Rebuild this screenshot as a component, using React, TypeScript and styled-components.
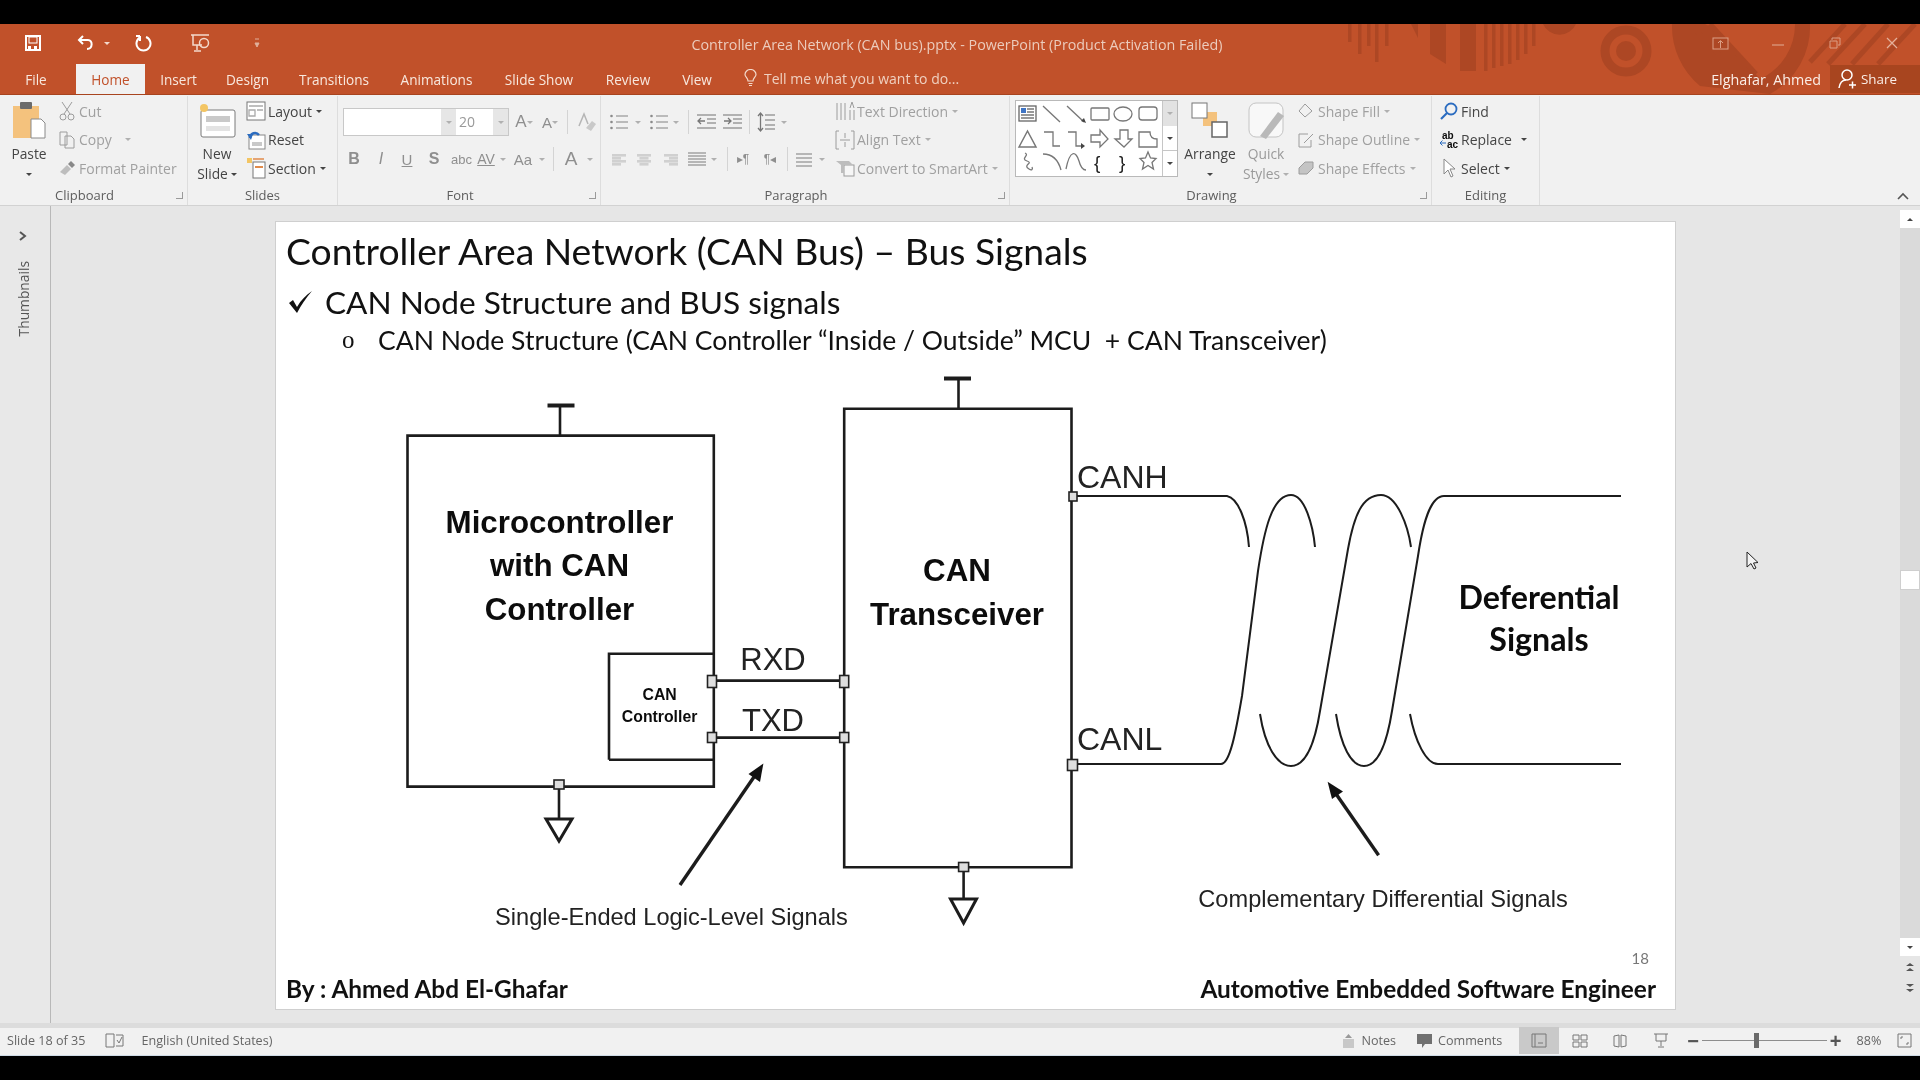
import React from 'react';
import styled, { createGlobalStyle } from 'styled-components';

const GlobalStyle = createGlobalStyle`
  html, body { margin: 0; padding: 0; background: #000; }
  * { box-sizing: border-box; }
`;

const Page = styled.div`
  width: 1920px;
  height: 1080px;
  background: #000;
  display: flex;
  flex-direction: column;
  overflow: hidden;
  filter: blur(0.45px);
  font-family: 'Open Sans', 'Liberation Sans', sans-serif;
`;

const Svg = styled.svg`
  display: block;
  flex-shrink: 0;
`;

/* ---------- title bar + tabs ---------- */
const Chrome = styled.header`
  margin-top: 24px;
  height: 71px;
  background: #c1512a;
  border-bottom: 1px solid #a8441f;
  position: relative;
  flex-shrink: 0;
`;

const ChromeArt = styled.svg`
  position: absolute;
  left: 1300px;
  top: 0;
`;

const TitleRow = styled.div`
  height: 38px;
  display: grid;
  grid-template-columns: 1fr auto 1fr;
  align-items: center;
  position: relative;
`;

const Qat = styled.div`
  display: flex;
  align-items: center;
`;

const QatButton = styled.div<{ $ml: number; $w: number }>`
  margin-left: ${(p) => p.$ml}px;
  width: ${(p) => p.$w}px;
  display: flex;
  justify-content: center;
`;

const WindowTitle = styled.div`
  color: #ecccbd;
  font-size: 14.3px;
  margin: 2px 6px 0 0;
  white-space: nowrap;
`;

const WinControls = styled.div`
  display: flex;
  justify-content: flex-end;
  height: 34px;
`;

const WinButton = styled.div`
  width: 57px;
  display: flex;
  align-items: center;
  justify-content: center;
`;

const TabRow = styled.div`
  height: 32px;
  display: flex;
  align-items: flex-end;
  position: relative;
`;

const Tab = styled.div<{ $w: number; $active?: boolean; $pr?: number }>`
  width: ${(p) => p.$w}px;
  height: 30px;
  line-height: 32px;
  text-align: center;
  padding-right: ${(p) => p.$pr ?? 0}px;
  font-size: 13.6px;
  color: ${(p) => (p.$active ? '#c1512a' : '#f8e8de')};
  background: ${(p) => (p.$active ? '#f1f1f1' : 'transparent')};
`;

const TellMe = styled.div`
  display: flex;
  align-items: center;
  gap: 7px;
  height: 32px;
  margin-left: 16px;
  color: #efd0c0;
  font-size: 14px;
`;

const UserName = styled.div`
  margin-left: auto;
  margin-right: 9px;
  height: 30px;
  line-height: 32px;
  color: #fbeee7;
  font-size: 14.3px;
`;

const ShareButton = styled.div`
  width: 90px;
  height: 28px;
  margin-bottom: 1px;
  background: #a8451f;
  color: #fbeee7;
  font-size: 13.4px;
  display: flex;
  align-items: center;
  gap: 4px;
  padding-left: 7px;
`;

/* ---------- ribbon ---------- */
const Ribbon = styled.div`
  height: 111px;
  background: #f1f1f1;
  border-bottom: 1px solid #d2d2d2;
  display: flex;
  position: relative;
  flex-shrink: 0;
`;

const Group = styled.section<{ $w: number }>`
  width: ${(p) => p.$w}px;
  height: 109px;
  margin-top: 1px;
  border-right: 1px solid #dddddd;
  display: flex;
  flex-direction: column;
  flex-shrink: 0;
`;

const GroupBody = styled.div`
  flex: 1;
  display: flex;
  padding-top: 1px;
`;

const GroupLabel = styled.div<{ $launcher?: boolean }>`
  height: 19px;
  line-height: 18px;
  text-align: center;
  font-size: 13px;
  color: #5d5d5d;
  padding-right: ${(p) => (p.$launcher ? 18 : 0)}px;
  position: relative;
`;

const Launcher = styled.span`
  position: absolute;
  right: 4px;
  top: 6px;
  width: 7px;
  height: 7px;
  border-right: 1px solid #9a9a9a;
  border-bottom: 1px solid #9a9a9a;
`;

const BigButton = styled.div<{ $w: number; $ml?: number; $dim?: boolean }>`
  width: ${(p) => p.$w}px;
  margin-left: ${(p) => p.$ml ?? 0}px;
  height: 87px;
  display: flex;
  flex-direction: column;
  align-items: center;
  font-size: 13.8px;
  line-height: 20px;
  color: ${(p) => (p.$dim ? '#9a9a9a' : '#444')};
`;

const BigIcon = styled.div`
  height: 47px;
  margin-bottom: 1px;
  padding-top: 5px;
`;

const BigLine = styled.div`
  display: flex;
  align-items: center;
  gap: 3px;
  height: 20px;
  white-space: nowrap;
`;

const SmallColumn = styled.div<{ $ml: number }>`
  margin-left: ${(p) => p.$ml}px;
  display: flex;
  flex-direction: column;
`;

const SmallRow = styled.div<{ $dim?: boolean }>`
  height: 28.5px;
  display: flex;
  align-items: center;
  gap: 1px;
  font-size: 14px;
  white-space: nowrap;
  color: ${(p) => (p.$dim ? '#a0a0a0' : '#454545')};
`;

const SmallIcon = styled.div`
  width: 22px;
  display: flex;
  justify-content: center;
`;

const Caret = styled.span<{ $dim?: boolean; $ml?: number; $up?: boolean; $pale?: boolean }>`
  display: inline-block;
  width: 0;
  height: 0;
  margin-left: ${(p) => p.$ml ?? 0}px;
  border-left: 3px solid transparent;
  border-right: 3px solid transparent;
  border-top: 3px solid ${(p) => (p.$pale ? '#f3d9cb' : p.$dim ? '#b0b0b0' : '#444')};
  transform: ${(p) => (p.$up ? 'rotate(180deg)' : 'none')};
`;

const IconStack = styled.div`
  display: flex;
  flex-direction: column;
  padding-top: 11px;
  gap: 9px;
`;

const IconRow = styled.div`
  display: flex;
  align-items: center;
  height: 28px;
`;

const Slot = styled.div<{ $ml: number; $w: number }>`
  margin-left: ${(p) => p.$ml}px;
  width: ${(p) => p.$w}px;
  display: flex;
  justify-content: center;
  align-items: center;
  color: #8f8f8f;
  font-size: 15px;
  white-space: nowrap;
`;

const Glyph = styled.span<{ $bold?: boolean; $italic?: boolean; $under?: boolean; $size?: number }>`
  font-family: 'Liberation Sans', sans-serif;
  font-weight: ${(p) => (p.$bold ? 700 : 400)};
  font-style: ${(p) => (p.$italic ? 'italic' : 'normal')};
  text-decoration: ${(p) => (p.$under ? 'underline' : 'none')};
  font-size: ${(p) => p.$size ?? 15}px;
`;

const Divider = styled.div<{ $ml: number }>`
  margin-left: ${(p) => p.$ml}px;
  width: 1px;
  height: 24px;
  background: #d4d4d4;
  flex-shrink: 0;
`;

const FontCombo = styled.div`
  margin-left: 5px;
  width: 166px;
  height: 28px;
  border: 1px solid #c8c8c8;
  display: flex;
  background: #fff;
  font-size: 14px;
  color: #999;
`;

const ComboArrow = styled.div`
  width: 15px;
  background: #e6e6e6;
  display: flex;
  align-items: center;
  justify-content: center;
`;

const ComboField = styled.div<{ $w: number }>`
  width: ${(p) => p.$w}px;
  padding-left: 3px;
  line-height: 26px;
`;

const ShapeGallery = styled.div`
  margin: 3px 0 0 5px;
  width: 163px;
  height: 77px;
  background: #fff;
  border: 1px solid #b9b9b9;
  display: flex;
`;

const GalleryScroll = styled.div`
  width: 16px;
  border-left: 1px solid #c6c6c6;
  display: flex;
  flex-direction: column;
`;

const GalleryCell = styled.div<{ $off?: boolean; $line?: boolean }>`
  flex: 1;
  background: ${(p) => (p.$off ? '#e2e2e2' : '#fff')};
  border-top: ${(p) => (p.$line ? '1px solid #c6c6c6' : 'none')};
  display: flex;
  align-items: center;
  justify-content: center;
`;

const CollapseRibbon = styled.div`
  position: absolute;
  right: 11px;
  bottom: 5px;
`;

/* ---------- editor ---------- */
const Editor = styled.main`
  height: 817px;
  display: flex;
  background: #e6e6e6;
  position: relative;
  flex-shrink: 0;
`;

const ThumbPane = styled.aside`
  width: 51px;
  border-right: 1px solid #b8b8b8;
  background: #e8e8e8;
  display: flex;
  flex-direction: column;
  align-items: center;
  padding: 25px 4px 0 0;
`;

const ThumbLabel = styled.div`
  margin-top: 20px;
  writing-mode: vertical-rl;
  transform: rotate(180deg);
  font-size: 13.8px;
  color: #555;
`;

const Workspace = styled.div`
  flex: 1;
  padding: 15px 0 0 224px;
`;

const Slide = styled.article`
  width: 1401px;
  height: 789px;
  background: #fff;
  border: 1px solid #cfcfcf;
  display: flex;
  flex-direction: column;
  font-family: Lato, 'Open Sans', sans-serif;
  color: #111;
`;

const SlideTitle = styled.h1`
  margin: 0;
  height: 60px;
  line-height: 58px;
  padding-left: 10px;
  font-size: 37.3px;
  font-weight: 400;
  white-space: nowrap;
`;

const BulletRow = styled.div`
  height: 40px;
  display: flex;
  align-items: center;
  padding-left: 12px;
  gap: 12px;
  font-size: 31.6px;
  white-space: nowrap;
`;

const SubRow = styled.div`
  height: 36px;
  display: flex;
  align-items: center;
  padding-left: 66px;
  font-size: 26.5px;
  white-space: nowrap;
`;

const SubBullet = styled.span`
  width: 36px;
  font-family: 'Liberation Serif', serif;
  font-size: 25px;
`;

const DiagramSvg = styled.svg`
  display: block;
  margin-top: 3px;
  flex-shrink: 0;
`;

const Wire = styled.path<{ $w?: number }>`
  fill: none;
  stroke: #1c1c1c;
  stroke-width: ${(p) => p.$w ?? 2.6}px;
`;

const Pin = styled.rect`
  fill: #dedede;
  stroke: #222;
  stroke-width: 1.6px;
`;

const ArrowHead = styled.polygon`
  fill: #111;
`;

const Ground = styled.polygon`
  fill: #fff;
  stroke: #1c1c1c;
  stroke-width: 3px;
`;

const DiagramText = styled.text<{ $size: number; $bold?: boolean; $calibri?: boolean }>`
  font-family: ${(p) => (p.$calibri ? "Lato, 'Open Sans', sans-serif" : "'Liberation Sans', sans-serif")};
  font-size: ${(p) => p.$size}px;
  font-weight: ${(p) => (p.$bold ? 700 : 400)};
  fill: ${(p) => (p.$bold ? '#0c0c0c' : '#222')};
`;

const PageNumber = styled.div`
  height: 24px;
  line-height: 24px;
  text-align: right;
  padding-right: 26px;
  font-size: 15px;
  color: #777;
`;

const SlideFooter = styled.div`
  height: 36px;
  display: flex;
  justify-content: space-between;
  align-items: center;
  padding: 0 19px 0 10px;
  font-size: 24.4px;
  font-weight: 700;
  white-space: nowrap;
`;

const ScrollBar = styled.div`
  width: 20px;
  padding-top: 4px;
  display: flex;
  flex-direction: column;
`;

const ScrollButton = styled.div`
  height: 18px;
  background: #fff;
  display: flex;
  align-items: center;
  justify-content: center;
  flex-shrink: 0;
`;

const ScrollTrack = styled.div<{ $h: number }>`
  height: ${(p) => p.$h}px;
  background: #dadada;
`;

const ScrollThumb = styled.div`
  height: 20px;
  background: #fff;
  border: 1px solid #cfcfcf;
`;

const PageJump = styled.div`
  height: 20px;
  margin-top: 1px;
  display: flex;
  align-items: center;
  justify-content: center;
`;

const MouseCursor = styled.svg`
  position: absolute;
  left: 1746px;
  top: 345px;
`;

/* ---------- status bar ---------- */
const BottomGutter = styled.div`
  height: 5px;
  background: #dcdcdc;
  flex-shrink: 0;
`;

const StatusBar = styled.footer`
  height: 28px;
  background: #f1f1f1;
  border-bottom: 1px solid #cfdbe6;
  padding-bottom: 2px;
  display: flex;
  align-items: center;
  font-size: 12.6px;
  color: #666;
  flex-shrink: 0;
`;

const StatusItem = styled.div<{ $ml: number }>`
  margin-left: ${(p) => p.$ml}px;
  display: flex;
  align-items: center;
  gap: 6px;
  white-space: nowrap;
`;

const ViewButton = styled.div<{ $active?: boolean; $ml?: number }>`
  width: 40px;
  height: 27px;
  margin-left: ${(p) => p.$ml ?? 0}px;
  background: ${(p) => (p.$active ? '#c9c9c9' : 'transparent')};
  display: flex;
  align-items: center;
  justify-content: center;
`;

const ZoomTrack = styled.div`
  width: 125px;
  height: 1px;
  margin-left: 3px;
  background: #8d8d8d;
  position: relative;
`;

const ZoomThumb = styled.span`
  position: absolute;
  left: 52px;
  top: -7px;
  width: 5px;
  height: 15px;
  background: #6a6a6a;
`;

const ZoomSign = styled.span<{ $ml: number }>`
  margin-left: ${(p) => p.$ml}px;
  font-family: 'Liberation Sans', sans-serif;
  font-size: 20px;
  line-height: 20px;
  font-weight: 700;
  color: #555;
`;

const G = '#9c9c9c';

/* ---------- small drawings ---------- */
const Lines = ({ w, rows, color = G, sw = 1.4 }: { w: number; rows: [number, number][]; color?: string; sw?: number }) => (
  <Svg width={w} height={20} viewBox={`0 0 ${w} 20`}>
    {rows.map(([x, y], i) => (
      <line key={i} x1={x} x2={w} y1={y} y2={y} stroke={color} strokeWidth={sw} />
    ))}
  </Svg>
);

const ListIcon = () => (
  <Svg width={18} height={20} viewBox="0 0 18 20">
    {[4, 10, 16].map((y) => (
      <g key={y}>
        <circle cx={1.5} cy={y} r={1.3} fill="#8a8a8a" />
        <line x1={6} x2={18} y1={y} y2={y} stroke={G} strokeWidth={1.3} />
      </g>
    ))}
  </Svg>
);

const IndentIcon = ({ flip }: { flip?: boolean }) => (
  <Svg width={19} height={20} viewBox="0 0 19 20">
    <path d="M0 3 H19 M10 7 H19 M10 11 H19 M0 16 H19" stroke={G} strokeWidth={1.3} />
    <path d={flip ? 'M1 9 H8 M5 6 L8 9 L5 12' : 'M8 9 H1 M4 6 L1 9 L4 12'} fill="none" stroke="#777" strokeWidth={1.3} />
  </Svg>
);

const SpacingIcon = () => (
  <Svg width={18} height={22} viewBox="0 0 18 22">
    <path d="M8 4 H18 M8 9 H18 M8 14 H18 M8 18 H18" stroke={G} strokeWidth={1.3} />
    <path d="M3.5 2 V20 M1 5 L3.5 2 L6 5 M1 17 L3.5 20 L6 17" fill="none" stroke="#777" strokeWidth={1.3} />
  </Svg>
);

const AlignBlock = ({ kind }: { kind: 'l' | 'c' | 'r' }) => {
  const rows = [
    [14, 5],
    [9, 8],
    [14, 11],
    [9, 14],
  ];
  return (
    <Svg width={14} height={20} viewBox="0 0 14 20">
      {rows.map(([w, y], i) => (
        <rect key={i} x={kind === 'l' ? 0 : kind === 'c' ? (14 - w) / 2 : 14 - w} y={y} width={w} height={2.6} fill="#d0d0d0" />
      ))}
    </Svg>
  );
};

const ChromeDecoration = () => {
  const stripes = [
    [48, 18], [58, 30], [67, 22], [75, 38], [85, 22], [184, 47], [192, 44], [200, 42], [208, 40], [216, 36], [224, 30], [232, 22],
  ];
  return (
    <ChromeArt width={620} height={70} viewBox="0 0 620 70">
      <g fill="#ad4724">
        {stripes.map(([x, h]) => (
          <rect key={x} x={x} y={0} width={3.5} height={h} />
        ))}
        <polygon points="111,0 118,0 118,14" />
        <polygon points="130,0 146,0 146,40 130,30" />
        <rect x={160} y={0} width={16} height={47} />
        <path d="M243 0 H276 A18 18 0 0 1 243 0 Z" />
        <circle cx={326} cy={27} r={10} />
      </g>
      <circle cx={326} cy={27} r={21} fill="none" stroke="#ad4724" strokeWidth={9} />
      <path d="M372 0 A78 78 0 0 0 400 62 L470 70 A76 76 0 0 0 510 0 L495 0 A60 60 0 0 1 460 55 L415 5 L405 0 Z" fill="#ad4724" />
      <g stroke="#ad4724" strokeWidth={5}>
        <line x1={390} y1={0} x2={445} y2={58} />
        <line x1={410} y1={0} x2={456} y2={50} />
        <line x1={545} y1={0} x2={510} y2={38} />
        <line x1={565} y1={0} x2={528} y2={40} />
        <line x1={588} y1={0} x2={552} y2={40} />
        <line x1={615} y1={0} x2={578} y2={40} />
      </g>
    </ChromeArt>
  );
};

const Gallery = () => (
  <Svg width={146} height={75} viewBox="1016 102 146 75">
    <g fill="none" stroke="#777" strokeWidth={1.3}>
      <rect x={1019} y={107} width={17} height={15} stroke="#666" />
      <path d="M1027 110 H1034 M1027 113 H1034 M1021 116 H1034 M1021 119 H1034" />
      <path d="M1043 107 L1060 123" />
      <path d="M1067 107 L1084 123" />
      <rect x={1091} y={109} width={18} height={12} rx={1} />
      <ellipse cx={1123} cy={115} rx={9} ry={7} />
      <rect x={1139} y={108} width={18} height={13} rx={3} />
      <path d="M1019 148 L1027.5 132 L1036 148 Z" strokeWidth={1.5} />
      <path d="M1044 133 H1053 V147 H1060" />
      <path d="M1068 133 H1076 V147 H1083" />
      <path d="M1091 136 H1100 V131 L1108 140 L1100 148 V143 H1091 Z" />
      <path d="M1120 131 H1128 V140 H1132 L1124 148 L1115 140 H1120 Z" />
      <path d="M1139 148 V133 H1150 C1150 138 1153 140 1157 140 V148 Z" />
      <path d="M1025 154 C1030 156 1020 160 1027 162 C1034 164 1022 166 1029 170 C1032 172 1033 170 1032 168" />
      <path d="M1043 155 C1052 155 1058 160 1061 171" />
      <path d="M1066 170 C1070 150 1076 152 1079 162 C1081 170 1084 171 1086 171" />
      <path d="M1148 153 L1150.5 159 L1156 159.5 L1152 163.5 L1153.5 170 L1148 166.5 L1142.5 170 L1144 163.5 L1140 159.5 L1145.5 159 Z" />
    </g>
    <rect x={1021} y={109} width={5} height={5} fill="#3f74c4" />
    <polygon points="1086,124 1081,122 1084,119" fill="#444" />
    <polygon points="1085,147 1081,144 1081,150" fill="#444" />
    <DiagramText x={1094} y={170} $size={19}>{'{'}</DiagramText>
    <DiagramText x={1119} y={170} $size={19}>{'}'}</DiagramText>
  </Svg>
);

const Diagram = () => (
  <DiagramSvg width={1399} height={585} viewBox="276 360 1399 585">
    {/* microcontroller */}
    <Wire d="M407.5 434.6 H713.8 V785.6 H407.5 Z" />
    <Wire d="M609 758.8 V652.8 H713.8 M609 758.8 H713.8" />
    <Wire d="M560 434 V404.5" />
    <Wire d="M547.5 404.5 H574.5" $w={4} />
    <Wire d="M559 786 V817" />
    <Ground points="546,818 572,818 559,840" />
    {/* transceiver */}
    <Wire d="M844.2 407.8 H1071.5 V866.3 H844.2 Z" />
    <Wire d="M958.5 407 V377.5" />
    <Wire d="M944 377.5 H971" $w={4} />
    <Wire d="M963.6 866 V897" />
    <Ground points="950.5,898 976.5,898 963.6,922" />
    {/* RXD / TXD */}
    <Wire d="M712 679.6 H844 M712 736.6 H844" />
    <Pin x={707.5} y={674.5} width={9} height={12} />
    <Pin x={707.5} y={731.5} width={9} height={10} />
    <Pin x={839.7} y={674.5} width={9} height={12} />
    <Pin x={839.7} y={731.5} width={9} height={10} />
    <Pin x={554} y={779} width={10} height={9} />
    <Pin x={958.6} y={861.5} width={10} height={9} />
    {/* twisted pair */}
    <g>
      <Wire $w={2} d="M1073 495 H1227 C1238 497 1247 520 1249 546" />
      <Wire $w={2} d="M1073 763 H1221 C1230 763 1236 730 1242 695 L1258 570 C1264 530 1272 494 1291 494 C1305 494 1313 525 1315 546" />
      <Wire $w={2} d="M1260 713 C1265 745 1277 765 1291 765 C1308 765 1316 735 1320 710 L1348 548 C1354 515 1362 494 1381 494 C1397 494 1408 525 1411 546" />
      <Wire $w={2} d="M1336 713 C1341 745 1351 765 1364 765 C1380 765 1388 735 1392 710 L1418 555 C1424 515 1432 495 1444 495 H1621" />
      <Wire $w={2} d="M1410 713 C1415 740 1426 763 1438 763 H1621" />
    </g>
    <Pin x={1069} y={491} width={8} height={9} />
    <Pin x={1067.5} y={758.5} width={10} height={11} />
    {/* callout arrows */}
    <Wire d="M680 884 L756 773" $w={3.4} />
    <ArrowHead points="763.4,762.6 760,781 748.5,773" />
    <Wire d="M1378.6 854.3 L1334 790" $w={3.4} />
    <ArrowHead points="1327.6,780.7 1343,790.5 1332,798" />
    {/* labels */}
    <DiagramText x={559.5} y={532} $size={31.3} $bold textAnchor="middle">Microcontroller</DiagramText>
    <DiagramText x={559.5} y={575} $size={31.3} $bold textAnchor="middle">with CAN</DiagramText>
    <DiagramText x={559.5} y={619} $size={31.3} $bold textAnchor="middle">Controller</DiagramText>
    <DiagramText x={957} y={580} $size={31.3} $bold textAnchor="middle">CAN</DiagramText>
    <DiagramText x={957} y={624} $size={31.3} $bold textAnchor="middle">Transceiver</DiagramText>
    <DiagramText x={659.6} y={699} $size={15.8} $bold textAnchor="middle">CAN</DiagramText>
    <DiagramText x={659.6} y={721} $size={15.8} $bold textAnchor="middle">Controller</DiagramText>
    <DiagramText x={773} y={669} $size={31} textAnchor="middle">RXD</DiagramText>
    <DiagramText x={773} y={730} $size={31} textAnchor="middle">TXD</DiagramText>
    <DiagramText x={1077} y={487} $size={32}>CANH</DiagramText>
    <DiagramText x={1077} y={749} $size={32}>CANL</DiagramText>
    <DiagramText x={1539} y={608} $size={32.2} $bold $calibri textAnchor="middle">Deferential</DiagramText>
    <DiagramText x={1539} y={650} $size={32.2} $bold $calibri textAnchor="middle">Signals</DiagramText>
    <DiagramText x={671.5} y={924} $size={23.6} textAnchor="middle">Single-Ended Logic-Level Signals</DiagramText>
    <DiagramText x={1383} y={906} $size={23.6} textAnchor="middle">Complementary Differential Signals</DiagramText>
  </DiagramSvg>
);

const tabs = [
  { label: 'File', w: 76, pr: 4 },
  { label: 'Home', w: 69, active: true },
  { label: 'Insert', w: 67 },
  { label: 'Design', w: 71 },
  { label: 'Transitions', w: 102 },
  { label: 'Animations', w: 103 },
  { label: 'Slide Show', w: 102 },
  { label: 'Review', w: 76 },
  { label: 'View', w: 62 },
];

const App = () => (
  <Page>
    <GlobalStyle />
    <Chrome>
      <ChromeDecoration />
      <TitleRow>
        <Qat>
          <QatButton $ml={24} $w={18}>
            <Svg width={18} height={18} viewBox="0 0 18 18">
              <path d="M2 2 H16 V16 H2 Z" fill="none" stroke="#fff" strokeWidth={2} />
              <rect x={5} y={3} width={8} height={6} fill="#c1512a" stroke="#fff" />
              <rect x={4} y={12} width={3} height={3} fill="#fff" />
              <rect x={10} y={12} width={3} height={3} fill="#fff" />
            </Svg>
          </QatButton>
          <QatButton $ml={35} $w={18}>
            <Svg width={18} height={18} viewBox="0 0 18 18">
              <path d="M6 2 L2 6 L6 10 M2 6 H11 C16 6 16 15 10 15" fill="none" stroke="#fff" strokeWidth={2} />
            </Svg>
          </QatButton>
          <QatButton $ml={8} $w={8}>
            <Caret $pale />
          </QatButton>
          <QatButton $ml={23} $w={18}>
            <Svg width={18} height={18} viewBox="0 0 18 18">
              <path d="M7 3 A7 7 0 1 0 12 3 M6 2 V7 M6 2 H2" fill="none" stroke="#fff" strokeWidth={2} />
            </Svg>
          </QatButton>
          <QatButton $ml={37} $w={22}>
            <Svg width={22} height={20} viewBox="0 0 22 20">
              <path d="M2 2 H20 M4 2 V12 H13 M8 12 V17 M5 18 H12" fill="none" stroke="#f3d9cb" strokeWidth={1.5} />
              <circle cx={15} cy={10} r={4.5} fill="none" stroke="#f3d9cb" strokeWidth={1.5} />
            </Svg>
          </QatButton>
          <QatButton $ml={42} $w={8}>
            <Svg width={6} height={10} viewBox="0 0 6 10">
              <path d="M1 1 H5 M1 5 H5 L3 9 Z" fill="#e0b09b" stroke="#e0b09b" />
            </Svg>
          </QatButton>
        </Qat>
        <WindowTitle>Controller Area Network (CAN bus).pptx - PowerPoint (Product Activation Failed)</WindowTitle>
        <WinControls>
          <WinButton>
            <Svg width={17} height={13} viewBox="0 0 17 13">
              <rect x={1} y={1} width={15} height={11} fill="none" stroke="#dc9f85" />
              <path d="M8.5 11 V4 M6 6 L8.5 3.5 L11 6" fill="none" stroke="#dc9f85" />
            </Svg>
          </WinButton>
          <WinButton>
            <Svg width={12} height={12} viewBox="0 0 12 12"><path d="M0 8 H12" stroke="#dc9f85" strokeWidth={1.2} /></Svg>
          </WinButton>
          <WinButton>
            <Svg width={12} height={12} viewBox="0 0 12 12">
              <path d="M3 3 V1 H11 V8 H9 M1 4 H8 V11 H1 Z" fill="none" stroke="#dc9f85" />
            </Svg>
          </WinButton>
          <WinButton>
            <Svg width={12} height={12} viewBox="0 0 12 12">
              <path d="M1 1 L11 11 M11 1 L1 11" stroke="#e3b19c" strokeWidth={1.2} />
            </Svg>
          </WinButton>
        </WinControls>
      </TitleRow>
      <TabRow>
        {tabs.map((t) => (
          <Tab key={t.label} $w={t.w} $active={t.active} $pr={t.pr}>{t.label}</Tab>
        ))}
        <TellMe>
          <Svg width={13} height={18} viewBox="0 0 13 18">
            <path d="M4 12 C4 9 1 8 1 5.5 A5.5 5 0 0 1 12 5.5 C12 8 9 9 9 12 Z M4.5 14.5 H8.5 M5 16.5 H8" fill="none" stroke="#f3d9cb" strokeWidth={1.2} />
          </Svg>
          Tell me what you want to do...
        </TellMe>
        <UserName>Elghafar, Ahmed</UserName>
        <ShareButton>
          <Svg width={20} height={22} viewBox="0 0 20 22">
            <circle cx={10} cy={7} r={5} fill="none" stroke="#fff" strokeWidth={1.5} />
            <path d="M2 20 C3 14 6 12 9 12 M12 17 H19 M15.5 13.5 V20.5" fill="none" stroke="#fff" strokeWidth={1.5} />
          </Svg>
          Share
        </ShareButton>
      </TabRow>
    </Chrome>

    <Ribbon>
      <Group $w={188}>
        <GroupBody>
          <BigButton $w={50} $ml={4}>
            <BigIcon>
              <Svg width={34} height={38} viewBox="0 0 34 38">
                <rect x={1} y={4} width={26} height={32} fill="#f4c27d" />
                <rect x={8} y={0} width={12} height={7} rx={1} fill="#6b6b6b" />
                <path d="M19 17 H29 L33 21 V36 H19 Z" fill="#fff" stroke="#8a8a8a" />
              </Svg>
            </BigIcon>
            <BigLine>Paste</BigLine>
            <BigLine><Caret /></BigLine>
          </BigButton>
          <SmallColumn $ml={2}>
            <SmallRow $dim>
              <SmallIcon>
                <Svg width={16} height={20} viewBox="0 0 16 20">
                  <path d="M3 1 L11 13 M13 1 L5 13" stroke={G} fill="none" />
                  <circle cx={4} cy={16} r={3} fill="none" stroke={G} />
                  <circle cx={12} cy={16} r={3} fill="none" stroke={G} />
                </Svg>
              </SmallIcon>
              Cut
            </SmallRow>
            <SmallRow $dim>
              <SmallIcon>
                <Svg width={16} height={18} viewBox="0 0 16 18">
                  <path d="M1 1 H8 V14 H1 Z M6 5 H12 L15 8 V17 H6 Z" fill="#f1f1f1" stroke={G} />
                </Svg>
              </SmallIcon>
              Copy
              <Caret $dim $ml={12} />
            </SmallRow>
            <SmallRow $dim>
              <SmallIcon>
                <Svg width={17} height={16} viewBox="0 0 17 16">
                  <path d="M1 12 L8 5 L12 9 L6 15 Z" fill="#bdbdbd" />
                  <path d="M9 4 L12 1 L16 5 L13 8 Z" fill="#888" />
                </Svg>
              </SmallIcon>
              Format Painter
            </SmallRow>
          </SmallColumn>
        </GroupBody>
        <GroupLabel $launcher>Clipboard<Launcher /></GroupLabel>
      </Group>

      <Group $w={150}>
        <GroupBody>
          <BigButton $w={48} $ml={5}>
            <BigIcon>
              <Svg width={38} height={36} viewBox="0 0 38 36">
                <rect x={3} y={8} width={34} height={27} rx={2} fill="#fff" stroke="#7b7b7b" />
                <rect x={8} y={14} width={24} height={6} fill="#c9c9c9" />
                <rect x={8} y={24} width={24} height={5} fill="#e3e3e3" />
                <circle cx={6} cy={6} r={4} fill="#f3c563" />
              </Svg>
            </BigIcon>
            <BigLine>New</BigLine>
            <BigLine>Slide<Caret /></BigLine>
          </BigButton>
          <SmallColumn $ml={4}>
            <SmallRow>
              <SmallIcon>
                <Svg width={20} height={20} viewBox="0 0 20 20">
                  <rect x={1} y={1} width={18} height={18} fill="#fff" stroke="#777" />
                  <path d="M3 5 H17 M3 9 H9 V15 H3 Z M11 9 H17" stroke="#aaa" fill="none" strokeWidth={1.3} />
                </Svg>
              </SmallIcon>
              Layout<Caret $ml={3} />
            </SmallRow>
            <SmallRow>
              <SmallIcon>
                <Svg width={20} height={20} viewBox="0 0 20 20">
                  <rect x={3} y={5} width={16} height={14} fill="#fff" stroke="#888" />
                  <path d="M4 8 A5 5 0 0 1 13 5" fill="none" stroke="#2b6cc0" strokeWidth={2.4} />
                  <polygon points="1,4 7,4 5,10" fill="#2b6cc0" />
                  <rect x={6} y={12} width={10} height={4} fill="#c9c9c9" />
                </Svg>
              </SmallIcon>
              Reset
            </SmallRow>
            <SmallRow>
              <SmallIcon>
                <Svg width={20} height={22} viewBox="0 0 20 22">
                  <rect x={7} y={5} width={12} height={16} fill="#fff" stroke="#777" />
                  <path d="M9 10 H17" stroke="#e08a4a" strokeWidth={2} />
                  <rect x={1} y={1} width={5} height={5} fill="#f3c563" />
                  <path d="M7 2 H18" stroke="#e08a4a" strokeWidth={1.5} />
                </Svg>
              </SmallIcon>
              Section<Caret $ml={3} />
            </SmallRow>
          </SmallColumn>
        </GroupBody>
        <GroupLabel>Slides</GroupLabel>
      </Group>

      <Group $w={263}>
        <GroupBody>
          <IconStack>
            <IconRow>
              <FontCombo>
                <ComboField $w={97} />
                <ComboArrow><Caret $dim /></ComboArrow>
                <ComboField $w={37}>20</ComboField>
                <ComboArrow><Caret $dim /></ComboArrow>
              </FontCombo>
              <Slot $ml={5} $w={20}><Glyph $size={17}>A</Glyph><Caret $dim /></Slot>
              <Slot $ml={6} $w={20}><Glyph $size={15}>A</Glyph><Caret $dim /></Slot>
              <Divider $ml={7} />
              <Slot $ml={9} $w={20}>
                <Svg width={20} height={20} viewBox="0 0 20 20">
                  <path d="M2 14 L7 2 L11 12" fill="none" stroke="#b5b5b5" strokeWidth={1.5} />
                  <path d="M9 16 L15 9 L19 12 L14 19 Z" fill="#c9c9c9" />
                </Svg>
              </Slot>
            </IconRow>
            <IconRow>
              <Slot $ml={3} $w={26}><Glyph $bold $size={16}>B</Glyph></Slot>
              <Slot $ml={1} $w={26}><Glyph $italic $size={16}>I</Glyph></Slot>
              <Slot $ml={0} $w={26}><Glyph $under $size={15}>U</Glyph></Slot>
              <Slot $ml={1} $w={26}><Glyph $bold $size={16}>S</Glyph></Slot>
              <Slot $ml={1} $w={27}><Glyph $size={13}>abc</Glyph></Slot>
              <Slot $ml={0} $w={22}><Glyph $under $size={14}>AV</Glyph></Slot>
              <Slot $ml={0} $w={12}><Caret $dim /></Slot>
              <Slot $ml={0} $w={28}><Glyph $size={15}>Aa</Glyph></Slot>
              <Slot $ml={0} $w={10}><Caret $dim /></Slot>
              <Divider $ml={6} />
              <Slot $ml={9} $w={16}><Glyph $size={19}>A</Glyph></Slot>
              <Slot $ml={6} $w={10}><Caret $dim /></Slot>
            </IconRow>
          </IconStack>
        </GroupBody>
        <GroupLabel $launcher>Font<Launcher /></GroupLabel>
      </Group>

      <Group $w={409}>
        <GroupBody>
          <IconStack>
            <IconRow>
              <Slot $ml={9} $w={18}><ListIcon /></Slot>
              <Slot $ml={6} $w={8}><Caret $dim /></Slot>
              <Slot $ml={8} $w={18}><ListIcon /></Slot>
              <Slot $ml={4} $w={8}><Caret $dim /></Slot>
              <Divider $ml={8} />
              <Slot $ml={8} $w={19}><IndentIcon /></Slot>
              <Slot $ml={7} $w={19}><IndentIcon flip /></Slot>
              <Divider $ml={7} />
              <Slot $ml={7} $w={18}><SpacingIcon /></Slot>
              <Slot $ml={5} $w={8}><Caret $dim /></Slot>
            </IconRow>
            <IconRow>
              <Slot $ml={11} $w={14}><AlignBlock kind="l" /></Slot>
              <Slot $ml={11} $w={14}><AlignBlock kind="c" /></Slot>
              <Slot $ml={13} $w={14}><AlignBlock kind="r" /></Slot>
              <Slot $ml={10} $w={18}><Lines w={18} rows={[[0, 4], [0, 7], [0, 10], [0, 13], [0, 16]]} /></Slot>
              <Slot $ml={4} $w={8}><Caret $dim /></Slot>
              <Divider $ml={9} />
              <Slot $ml={8} $w={14}><Glyph $size={12}>▸¶</Glyph></Slot>
              <Slot $ml={12} $w={16}><Glyph $size={12}>¶◂</Glyph></Slot>
              <Divider $ml={9} />
              <Slot $ml={8} $w={16}><Lines w={16} rows={[[0, 5], [0, 9], [0, 13], [0, 17]]} /></Slot>
              <Slot $ml={6} $w={8}><Caret $dim /></Slot>
            </IconRow>
          </IconStack>
          <SmallColumn $ml={8}>
            <SmallRow $dim>
              <SmallIcon>
                <Svg width={20} height={22} viewBox="0 0 20 22">
                  <path d="M2 3 V20 M6 3 V20 M10 3 V20 M15 8 L17 2 L19 8 M15 10 V20 M19 10 V20" stroke={G} fill="none" />
                </Svg>
              </SmallIcon>
              Text Direction<Caret $dim $ml={3} />
            </SmallRow>
            <SmallRow $dim>
              <SmallIcon>
                <Svg width={20} height={20} viewBox="0 0 20 20">
                  <path d="M4 1 H1 V19 H4 M16 1 H19 V19 H16 M5 10 H15 M10 3 V8 M10 12 V17" stroke={G} fill="none" />
                </Svg>
              </SmallIcon>
              Align Text<Caret $dim $ml={3} />
            </SmallRow>
            <SmallRow $dim>
              <SmallIcon>
                <Svg width={20} height={18} viewBox="0 0 20 18">
                  <rect x={9} y={6} width={10} height={11} fill="#f6f6f6" stroke={G} />
                  <path d="M1 2 H14 L18 6 H9 V14 H6 V6 Z" fill="#bdbdbd" />
                </Svg>
              </SmallIcon>
              Convert to SmartArt<Caret $dim $ml={3} />
            </SmallRow>
          </SmallColumn>
        </GroupBody>
        <GroupLabel $launcher>Paragraph<Launcher /></GroupLabel>
      </Group>

      <Group $w={422}>
        <GroupBody>
          <ShapeGallery>
            <Gallery />
            <GalleryScroll>
              <GalleryCell $off><Caret $dim /></GalleryCell>
              <GalleryCell><Caret /></GalleryCell>
              <GalleryCell $line><Caret /></GalleryCell>
            </GalleryScroll>
          </ShapeGallery>
          <BigButton $w={56} $ml={4}>
            <BigIcon>
              <Svg width={38} height={36} viewBox="0 0 38 36">
                <rect x={12} y={10} width={14} height={14} fill="#f4c27d" />
                <rect x={1} y={1} width={15} height={15} fill="#fff" stroke="#777" />
                <rect x={21} y={20} width={15} height={15} fill="#fff" stroke="#666" strokeWidth={1.5} />
              </Svg>
            </BigIcon>
            <BigLine>Arrange</BigLine>
            <BigLine><Caret /></BigLine>
          </BigButton>
          <BigButton $w={50} $ml={3} $dim>
            <BigIcon>
              <Svg width={40} height={38} viewBox="0 0 40 38">
                <rect x={3} y={1} width={34} height={34} rx={7} fill="#f8f8f8" stroke="#c4c4c4" />
                <path d="M38 14 L20 37 L14 34 L32 10 Z" fill="#b9b9b9" />
              </Svg>
            </BigIcon>
            <BigLine>Quick</BigLine>
            <BigLine>Styles<Caret $dim /></BigLine>
          </BigButton>
          <SmallColumn $ml={4}>
            <SmallRow $dim>
              <SmallIcon>
                <Svg width={18} height={18} viewBox="0 0 18 18">
                  <path d="M8 2 L15 9 L8 15 L2 9 Z" fill="none" stroke={G} />
                </Svg>
              </SmallIcon>
              Shape Fill<Caret $dim $ml={3} />
            </SmallRow>
            <SmallRow $dim>
              <SmallIcon>
                <Svg width={18} height={18} viewBox="0 0 18 18">
                  <path d="M2 3 H11 M2 3 V16 H14 V9 M7 12 L16 3" fill="none" stroke={G} />
                </Svg>
              </SmallIcon>
              Shape Outline<Caret $dim $ml={3} />
            </SmallRow>
            <SmallRow $dim>
              <SmallIcon>
                <Svg width={18} height={18} viewBox="0 0 18 18">
                  <path d="M2 9 L8 3 H16 V9 L10 15 H2 Z" fill="#c4c4c4" stroke={G} />
                </Svg>
              </SmallIcon>
              Shape Effects<Caret $dim $ml={3} />
            </SmallRow>
          </SmallColumn>
        </GroupBody>
        <GroupLabel $launcher>Drawing<Launcher /></GroupLabel>
      </Group>

      <Group $w={108}>
        <GroupBody>
          <SmallColumn $ml={6}>
            <SmallRow>
              <SmallIcon>
                <Svg width={18} height={18} viewBox="0 0 18 18">
                  <circle cx={11} cy={7} r={5.5} fill="none" stroke="#2b6cc0" strokeWidth={1.8} />
                  <path d="M7 11 L1 17" stroke="#2b6cc0" strokeWidth={2.2} />
                </Svg>
              </SmallIcon>
              Find
            </SmallRow>
            <SmallRow>
              <SmallIcon>
                <Svg width={20} height={20} viewBox="0 0 20 20">
                  <path d="M1 13 H7 M1 13 L3.5 10.5 M1 13 L3.5 15.5" stroke="#2b6cc0" fill="none" />
                  <DiagramText x={3} y={9} $size={10} $bold>ab</DiagramText>
                  <DiagramText x={8} y={18} $size={10} $bold>ac</DiagramText>
                </Svg>
              </SmallIcon>
              Replace<Caret $ml={8} />
            </SmallRow>
            <SmallRow>
              <SmallIcon>
                <Svg width={14} height={20} viewBox="0 0 14 20">
                  <path d="M2 1 V16 L6 12 L9 19 L11 18 L8 11 L13 11 Z" fill="#fff" stroke="#888" />
                </Svg>
              </SmallIcon>
              Select<Caret $ml={3} />
            </SmallRow>
          </SmallColumn>
        </GroupBody>
        <GroupLabel>Editing</GroupLabel>
      </Group>

      <CollapseRibbon>
        <Svg width={12} height={8} viewBox="0 0 12 8">
          <path d="M1 7 L6 2 L11 7" fill="none" stroke="#555" strokeWidth={1.6} />
        </Svg>
      </CollapseRibbon>
    </Ribbon>

    <Editor>
      <ThumbPane>
        <Svg width={8} height={10} viewBox="0 0 8 10">
          <path d="M1 1 L6 5 L1 9" fill="none" stroke="#555" strokeWidth={2} />
        </Svg>
        <ThumbLabel>Thumbnails</ThumbLabel>
      </ThumbPane>
      <Workspace>
        <Slide>
          <SlideTitle>Controller Area Network (CAN Bus) – Bus Signals</SlideTitle>
          <BulletRow>
            <Svg width={25} height={24} viewBox="0 0 25 24">
              <path d="M1 13 L5 10 L9 17 C13 10 18 5 24 1 C18 8 13 15 9 23 Z" fill="#111" />
            </Svg>
            CAN Node Structure and BUS signals
          </BulletRow>
          <SubRow>
            <SubBullet>o</SubBullet>
            CAN Node Structure (CAN Controller “Inside / Outside” MCU &nbsp;+ CAN Transceiver)
          </SubRow>
          <Diagram />
          <PageNumber>18</PageNumber>
          <SlideFooter>
            <span>By : Ahmed Abd El-Ghafar</span>
            <span>Automotive Embedded Software Engineer</span>
          </SlideFooter>
        </Slide>
      </Workspace>
      <ScrollBar>
        <ScrollButton><Caret $up /></ScrollButton>
        <ScrollTrack $h={342} />
        <ScrollThumb />
        <ScrollTrack $h={348} />
        <ScrollButton><Caret /></ScrollButton>
        <PageJump>
          <Svg width={12} height={10} viewBox="0 0 12 10">
            <path d="M2 4 L6 1 L10 4 Z M2 9 L6 6 L10 9 Z" fill="#555" />
          </Svg>
        </PageJump>
        <PageJump>
          <Svg width={12} height={10} viewBox="0 0 12 10">
            <path d="M2 1 L6 4 L10 1 Z M2 6 L6 9 L10 6 Z" fill="#555" />
          </Svg>
        </PageJump>
      </ScrollBar>
      <MouseCursor width={14} height={20} viewBox="0 0 14 20">
        <path d="M1 1 V16 L5 12.5 L8 18 L10 17 L7.5 12 L12 11.5 Z" fill="#f4f4f4" stroke="#222" />
      </MouseCursor>
    </Editor>
    <BottomGutter />
    <StatusBar>
      <StatusItem $ml={7}>Slide 18 of 35</StatusItem>
      <StatusItem $ml={20}>
        <Svg width={19} height={15} viewBox="0 0 19 15">
          <path d="M1 1 H9 V14 H1 Z M11 2 H18 V13 H11" fill="none" stroke="#777" />
          <path d="M12 7 L14 10 L17 4" fill="none" stroke="#777" />
        </Svg>
      </StatusItem>
      <StatusItem $ml={17}>English (United States)</StatusItem>
      <StatusItem $ml={1070}>
        <Svg width={13} height={16} viewBox="0 0 13 16">
          <rect x={1} y={6} width={11} height={9} fill="#c8c8c8" />
          <path d="M3 5 L6.5 1 L10 5 Z" fill="#999" />
        </Svg>
        Notes
      </StatusItem>
      <StatusItem $ml={21}>
        <Svg width={15} height={16} viewBox="0 0 15 16">
          <path d="M0 1 H15 V11 H8 L5 15 V11 H0 Z" fill="#707070" />
        </Svg>
        Comments
      </StatusItem>
      <ViewButton $active $ml={17}>
        <Svg width={16} height={15} viewBox="0 0 16 15">
          <path d="M1 1 H15 V14 H1 Z M4 1 V14 M7 10 H12" fill="none" stroke="#777" />
        </Svg>
      </ViewButton>
      <ViewButton $ml={1}>
        <Svg width={16} height={14} viewBox="0 0 16 14">
          <path d="M1 1 H7 V6 H1 Z M9 1 H15 V6 H9 Z M1 8 H7 V13 H1 Z M9 8 H15 V13 H9 Z" fill="none" stroke="#777" />
        </Svg>
      </ViewButton>
      <ViewButton>
        <Svg width={14} height={14} viewBox="0 0 14 14">
          <path d="M1 2 L6 1 V13 L1 12 Z M13 2 L8 1 V13 L13 12 Z" fill="none" stroke="#777" />
        </Svg>
      </ViewButton>
      <ViewButton $ml={1}>
        <Svg width={16} height={15} viewBox="0 0 16 15">
          <path d="M1 1 H15 M3 1 V8 H13 V1 M8 8 V13 M5 14 H11" fill="none" stroke="#777" />
        </Svg>
      </ViewButton>
      <ZoomSign $ml={6}>−</ZoomSign>
      <ZoomTrack><ZoomThumb /></ZoomTrack>
      <ZoomSign $ml={3}>+</ZoomSign>
      <StatusItem $ml={15}>88%</StatusItem>
      <StatusItem $ml={16}>
        <Svg width={15} height={15} viewBox="0 0 15 15">
          <path d="M1 1 H14 V14 H1 Z M4 4 H6 M4 4 V6 M11 11 H9 M11 11 V9" fill="none" stroke="#777" />
        </Svg>
      </StatusItem>
    </StatusBar>
  </Page>
);

export default App;
